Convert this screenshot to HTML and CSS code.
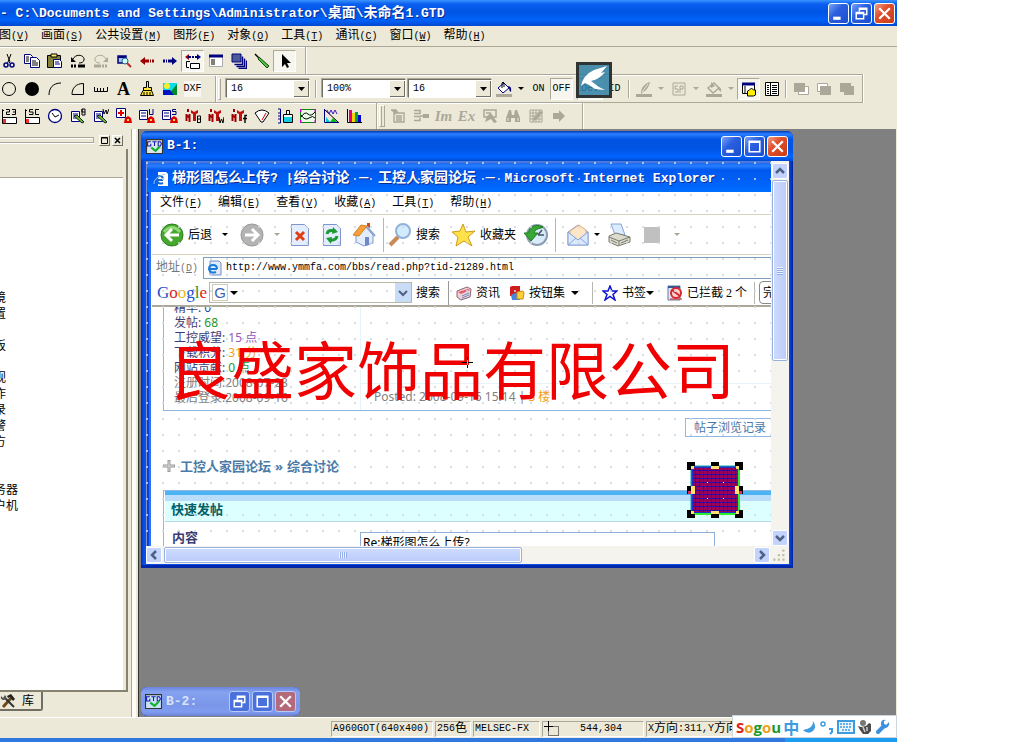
FILE: index.html
```
<!DOCTYPE html>
<html lang="zh">
<head>
  <meta charset="UTF-8" />
  <meta name="viewport" content="width=device-width, initial-scale=1.0"/>
  <title>C:\Documents and Settings\Administrator\桌面\未命名1.GTD</title>
  <link rel="stylesheet" href="styles.css">
</head>
<body>
<div class="app">

  <header class="titlebar">
    <h1 class="title">- C:\Documents and Settings\Administrator\<i>桌面</i>\<i>未命名</i>1.GTD</h1>
    <div class="win-buttons">
      <button class="win-btn" aria-label="最小化"><svg viewBox="0 0 18 18"><path d="M4 12h7v3H4z" fill="#fff"/></svg></button>
      <button class="win-btn" aria-label="还原"><svg viewBox="0 0 18 18"><path d="M7 7V4h7v6h-3M7 5h7M4 8h7v6H4zM4 9h7" fill="none" stroke="#fff" stroke-width="1.4"/></svg></button>
      <button class="win-btn close" aria-label="关闭"><svg viewBox="0 0 18 18"><path d="M4 4l10 10M14 4L4 14" stroke="#fff" stroke-width="2.2"/></svg></button>
    </div>
  </header>

  <nav class="menubar">
    <a href="#">图<small>(<u>V</u>)</small></a>
    <a href="#">画面<small>(<u>S</u>)</small></a>
    <a href="#">公共设置<small>(<u>M</u>)</small></a>
    <a href="#">图形<small>(<u>F</u>)</small></a>
    <a href="#">对象<small>(<u>O</u>)</small></a>
    <a href="#">工具<small>(<u>T</u>)</small></a>
    <a href="#">通讯<small>(<u>C</u>)</small></a>
    <a href="#">窗口<small>(<u>W</u>)</small></a>
    <a href="#">帮助<small>(<u>H</u>)</small></a>
  </nav>

  <!-- 标准工具栏 -->
  <div class="toolbar main">
    <button class="tool" aria-label="剪切"><svg viewBox="0 0 16 16"><path d="M6 1l3 8M10 1L7 9" stroke="#000" fill="none"/><path d="M7 9L6 11M8 9l2 2" stroke="#00007f"/><circle cx="5" cy="12" r="2" fill="none" stroke="#00007f" stroke-width="1.5"/><circle cx="11" cy="12" r="2" fill="none" stroke="#00007f" stroke-width="1.5"/></svg></button>
    <button class="tool" aria-label="复制"><svg viewBox="0 0 16 16"><path d="M.5 1.500h6l2 2v7h-8z" fill="#fff" stroke="#00007f"/><path d="M2 4h3M2 6h3M2 8h3" stroke="#000"/><path d="M6.500 4.500h6l3 3v7h-9z" fill="#fff" stroke="#00007f"/><path d="M8 8h4M8 10h6M8 12h6" stroke="#000"/></svg></button>
    <button class="tool" aria-label="粘贴"><svg viewBox="0 0 16 16"><path d="M.5 2.500h13v12H.5z" fill="#84823c" stroke="#000"/><path d="M4 1h6v3H4z" fill="#ffe96a" stroke="#000"/><path d="M6.500 6.500h6l2 2v6h-8z" fill="#fff" stroke="#00007f"/><path d="M8 9h4M8 11h5" stroke="#00007f"/></svg></button>
    <button class="tool" aria-label="撤销"><svg viewBox="0 0 16 16"><path d="M3 6c3-6 12-4 11 1-.5 2-2 3-5 3" fill="none" stroke="#000"/><path d="M1 4v5h5z"/><path d="M1 13h6" stroke="#000" stroke-width="3" stroke-dasharray="2 1"/><path d="M8 13h7" stroke="#000" stroke-width="3"/></svg></button>
    <button class="tool" disabled aria-label="重做"><svg viewBox="0 0 16 16"><g fill="none" stroke="#aca899"><path d="M13 6c-3-6-12-4-11 1 .5 2 2 3 5 3"/><path d="M9 13h6" stroke-width="3" stroke-dasharray="2 1"/><path d="M1 13h7" stroke-width="3"/></g><path d="M15 4v5h-5z" fill="#aca899"/></svg></button>
    <button class="tool" aria-label="预览"><svg viewBox="0 0 16 16"><path d="M2 3h8v7H2z" fill="#9fc3e8" stroke="#00007f" stroke-width="1.500"/><path d="M2 4h8" stroke="#00007f" stroke-width="2"/><circle cx="9" cy="8" r="3" fill="#cff" stroke="#24648c"/><path d="M11 10l4 4" stroke="#c3282b" stroke-width="2"/></svg></button>
    <button class="tool" aria-label="上一个"><svg viewBox="0 0 16 16"><path d="M1 8l5-4v8z" fill="#9b0000"/><path d="M5 8h5M11 8h1M13 8h2" stroke="#9b0000" stroke-width="3"/></svg></button>
    <button class="tool" aria-label="下一个"><svg viewBox="0 0 16 16"><path d="M15 8l-5-4v8z" fill="#00007f"/><path d="M11 8H6M5 8H4M3 8H1" stroke="#00007f" stroke-width="3"/></svg></button>
    <button class="tool pressed" aria-label="切换画面"><svg viewBox="0 0 16 16"><path d="M0 4l4-3v6z" fill="#9b0000"/><path d="M16 4l-4-3v6z" fill="#00007f"/><path d="M3 4h3M7 4h2M10 4h3" stroke="#00007f" stroke-width="2"/><path d="M5 8.500H1.500v6H4M5.500 10.500h9v5h-9z" fill="#fff" stroke="#000"/></svg></button>
    <button class="tool" aria-label="画面列表"><svg viewBox="0 0 16 16"><path d="M1.500 2.500h13v11h-13z" fill="#fff" stroke="#aaa"/><path d="M1 3h14" stroke="#00007f" stroke-width="3"/><path d="M3 7h4M3 9h4M3 11h4" stroke="#000"/></svg></button>
    <button class="tool" aria-label="层叠"><svg viewBox="0 0 16 16"><path d="M7.500 15.500h8v-8M5.500 13.500h8v-8M3.500 11.500h8v-8" fill="none" stroke="#00007f" stroke-width="1.400"/><path d="M1 1h9v8H1z" fill="#4a5898" stroke="#00007f"/></svg></button>
    <button class="tool" aria-label="画笔"><svg viewBox="0 0 16 16"><path d="M1 1l5 5" stroke="#000" stroke-width="1.500"/><path d="M5 4l10 9-2 2L4 6z" fill="#4fc63a" stroke="#124b12"/></svg></button>
    <button class="tool pressed" aria-label="选择"><svg viewBox="0 0 16 16"><path d="M5 1v13l3-3 2 4 2-1-2-4h4z"/></svg></button>
  </div>

  <!-- 绘图工具栏 -->
  <div class="toolbar draw">
    <button class="tool" aria-label="圆"><svg viewBox="0 0 16 16"><circle cx="8" cy="8" r="6.500" fill="none" stroke="#000"/></svg></button>
    <button class="tool" aria-label="实心圆"><svg viewBox="0 0 16 16"><circle cx="8" cy="8" r="7"/></svg></button>
    <button class="tool" aria-label="圆弧"><svg viewBox="0 0 16 16"><path d="M2 14C2 7 6 2 14 2" fill="none" stroke="#000"/></svg></button>
    <button class="tool" aria-label="扇形"><svg viewBox="0 0 16 16"><path d="M2 13.500C2 7 6 2.500 13.500 2.500v11z" fill="none" stroke="#000"/></svg></button>
    <button class="tool" aria-label="刻度"><svg viewBox="0 0 16 16"><path d="M1.500 6v4.500h13V6M4.500 7v3M7.500 7v3M10.500 7v3" fill="none" stroke="#000"/></svg></button>
    <button class="tool letter">A</button>
    <button class="tool" aria-label="刷子"><svg viewBox="0 0 16 16"><path d="M7.500.5h2v6h3v3h-8v-3h3z" fill="#ffe83b" stroke="#000"/><path d="M4 9.500L1.500 14.500h13l-2-5zM5 11v3M8 11v3M11 11v3" fill="#ffe83b" stroke="#000"/></svg></button>
    <button class="tool" aria-label="图片"><svg viewBox="0 0 16 16"><path d="M1 2h14v12H1z" fill="#10dbea"/><path d="M15 3v11H6z" fill="#008b2b"/><path d="M1 9h7l4 5H1z" fill="#0014c4"/><circle cx="5" cy="5" r="3" fill="#f8ef26"/></svg></button>
    <button class="tool white">DXF</button>
    <span class="sep wide"></span><span class="grip"></span>
    <select class="combo" aria-label="线宽"><option>16</option></select>
    <span class="sep mid"></span>
    <select class="combo" aria-label="缩放"><option>100%</option></select>
    <select class="combo near" aria-label="网格"><option>16</option></select>
    <button class="tool" aria-label="填充"><svg viewBox="0 0 16 16"><path d="M0 13h16v3H0z" fill="#aca899"/><path d="M8 2l5 5-6 5-5-5z" fill="#fff" stroke="#00007f"/><path d="M6 7V2q1-2 2 0v4" fill="none" stroke="#000"/><path d="M12 5q4 0 3 6-2-1-2-4z" fill="#00007f"/></svg></button>
    <span class="drop"></span>
    <button class="tool">ON</button>
    <button class="tool pressed">OFF</button>
    <button class="tool pressed dev">Dev</button>
    <button class="tool">ID</button>
    <span class="sep"></span>
    <button class="tool" disabled aria-label="线条颜色"><svg viewBox="0 0 16 16"><path d="M0 13h16v3H0zM5 12c0-5 3-9 9-11-1 5-4 9-7 10l-2 2z" fill="#aca899"/><path d="M6 11l6-8" stroke="#ece9d8"/></svg></button>
    <span class="drop off"></span>
    <button class="tool" disabled aria-label="SP"><svg viewBox="0 0 16 16"><path d="M2 2h12v12H2z" fill="none" stroke="#aca899"/><path d="M7 5H4v3h3v3H4M9 12V5h3v3H9" fill="none" stroke="#aca899"/></svg></button>
    <span class="drop off"></span>
    <button class="tool" disabled aria-label="填充颜色"><svg viewBox="0 0 16 16"><path d="M0 13h16v3H0z" fill="#aca899"/><path d="M8 2l5 5-6 5-5-5z" fill="none" stroke="#aca899" stroke-width="1.500"/><path d="M5 7V1l4 4M12 6q4 0 3 5-3-2-3-5z" fill="#aca899"/></svg></button>
    <span class="drop off"></span>
    <button class="tool pressed" aria-label="属性"><svg viewBox="0 0 16 16"><path d="M1.500 2.500h12v10h-12z" fill="#fff" stroke="#000"/><path d="M1 3h13" stroke="#00007f" stroke-width="3"/><path d="M4 5v8" stroke="#000"/><path d="M6.500 10l2-1 2-2 2 2h2v5l-2 1h-6z" fill="#fff200" stroke="#000"/></svg></button>
    <button class="tool" aria-label="列表"><svg viewBox="0 0 16 16"><path d="M1.500 1.500h13v13h-13zM6.500 2v12" fill="#fff" stroke="#000"/><path d="M3 4.500h2M3 6.500h2M3 8.500h2M3 10.500h2M3 12.500h2M8 4.500h5M8 6.500h5M8 8.500h5M8 10.500h5M8 12.500h5" stroke="#000"/></svg></button>
    <span class="sep"></span>
    <button class="tool" disabled aria-label="置前"><svg viewBox="0 0 16 16"><path d="M5.500 5.500h10v8h-10z" fill="#fff" stroke="#aca899"/><path d="M1 2h11v9H1z" fill="#aca899"/></svg></button>
    <button class="tool" disabled aria-label="置后"><svg viewBox="0 0 16 16"><path d="M1.500 2.500h10v8h-10z" fill="#fff" stroke="#aca899"/><path d="M4 5h11v9H4z" fill="#aca899"/></svg></button>
    <button class="tool" disabled aria-label="组合"><svg viewBox="0 0 16 16"><path d="M1 2h11v3h3v9H5v-3H1z" fill="#aca899"/></svg></button>
  </div>

  <!-- 部件工具栏 -->
  <div class="toolbar last">
    <button class="tool" aria-label="数值"><svg viewBox="0 0 16 16"><path d="M1.500 15V1.500L3 3M5 1.500h3.500V4H5.500v2.500H9M11 1.500h3.500v5H11M12 4h2" fill="none" stroke="#000"/><path d="M1.500 9.500h14v6h-14z" fill="#fff" stroke="#000"/><path d="M2 11h3v4H2z" fill="#e33"/></svg></button>
    <button class="tool" aria-label="字符"><svg viewBox="0 0 16 16"><path d="M1.500 15V1.500L3 3M9 1.500H5.500V4H9v2.500H5M15 1.500h-3.500v5H15" fill="none" stroke="#000"/><path d="M1.500 9.500h14v6h-14z" fill="#fff" stroke="#000"/><path d="M2 11h3v4H2z" fill="#e33"/></svg></button>
    <button class="tool" aria-label="时钟"><svg viewBox="0 0 16 16"><circle cx="8" cy="8" r="6.500" fill="#fff" stroke="#00007f" stroke-width="1.300"/><path d="M5 5l3 4 4-2" fill="none" stroke="#000"/></svg></button>
    <button class="tool" aria-label="注释B"><svg viewBox="0 0 16 16"><path d="M1.500 3.500h8v10h-8z" fill="#fff" stroke="#00007f"/><path d="M3 6h5M3 8h5M3 10h4" stroke="#00007f"/><path d="M4 8l3-1 7 7-2 1z" fill="#70bb20" stroke="#123"/><path d="M12 1v6h3V4h-3V1h3v3" fill="none" stroke="#000"/></svg></button>
    <button class="tool" aria-label="注释W"><svg viewBox="0 0 16 16"><path d="M1.500 3.500h8v10h-8z" fill="#fff" stroke="#00007f"/><path d="M3 6h5M3 8h5M3 10h4" stroke="#00007f"/><path d="M4 8l3-1 7 7-2 1z" fill="#70bb20" stroke="#123"/><path d="M10 1l1 5 2-4 1 4 2-5" fill="none" stroke="#000"/></svg></button>
    <button class="tool" aria-label="报警历史"><svg viewBox="0 0 16 16"><path d="M.5.500h9v9h-9z" fill="#fff" stroke="#00007f"/><path d="M5 2v6M2 5h6" stroke="#e00000" stroke-width="2"/><path d="M8 15l1-5 3-2 3 2 1 5z" fill="#e00000"/><path d="M12 11v2" stroke="#ffdf3c" stroke-width="2"/></svg></button>
    <button class="tool" aria-label="用户报警"><svg viewBox="0 0 16 16"><path d="M.5 2.500h8v9h-8z" fill="#fff" stroke="#00007f"/><path d="M2 5h5M2 8h5M10.500 1v5.500H14V1" fill="none" stroke="#00007f"/><path d="M8 15l1-5 3-2 3 2 1 5z" fill="#e00000"/><path d="M12 11v2" stroke="#ffdf3c" stroke-width="2"/></svg></button>
    <button class="tool" aria-label="系统报警"><svg viewBox="0 0 16 16"><path d="M.5 2.500h8v9h-8z" fill="#fff" stroke="#00007f"/><path d="M2 5h5M2 8h5M14 1.500h-3.500v2H14v3h-4" fill="none" stroke="#00007f"/><path d="M8 15l1-5 3-2 3 2 1 5z" fill="#e00000"/><path d="M12 11v2" stroke="#ffdf3c" stroke-width="2"/></svg></button>
    <button class="tool" aria-label="部件B"><svg viewBox="0 0 16 16"><path d="M3 1v3M1.500 6v7M4.500 6v8M1 7l4 3" fill="none" stroke="#a00000" stroke-width="2"/><path d="M6 2l3 2 4-2v3l-2 1v7H8V6L6 5z" fill="#c01010"/><path d="M12.500 15V8h3v6.500h-3M12 11h3" fill="none" stroke="#000"/></svg></button>
    <button class="tool" aria-label="部件W"><svg viewBox="0 0 16 16"><path d="M3 1v3M1.500 6v7M4.500 6v8M1 7l4 3" fill="none" stroke="#a00000" stroke-width="2"/><path d="M6 2l3 2 4-2v3l-2 1v7H8V6L6 5z" fill="#c01010"/><path d="M11 9l1 6 1.500-4 1.500 4 1-6" fill="none" stroke="#000"/></svg></button>
    <button class="tool" aria-label="部件f"><svg viewBox="0 0 16 16"><path d="M3 1v3M1.500 6v7M4.500 6v8M1 7l4 3" fill="none" stroke="#a00000" stroke-width="2"/><path d="M6 2l3 2 4-2v3l-2 1v7H8V6L6 5z" fill="#c01010"/><path d="M16 7.500h-2V15M12 10.500h4" fill="none" stroke="#000" stroke-width="1.400"/></svg></button>
    <button class="tool" aria-label="面板仪表"><svg viewBox="0 0 16 16"><path d="M1 5q7-6 14 0l-6 9H7z" fill="#fff" stroke="#000"/><path d="M12 5l-4 7" stroke="#d00"/></svg></button>
    <button class="tool" aria-label="液位"><svg viewBox="0 0 16 16"><path d="M1 1h2.500v14H1M1 5h2M1 8h2M1 11h2" fill="none" stroke="#00007f"/><path d="M9.500 6V2.500h3V6M6.500 6.500h9v8h-9z" fill="#fff" stroke="#000"/><path d="M7 9h8v5H7z" fill="#11cfe0"/></svg></button>
    <button class="tool" aria-label="趋势图"><svg viewBox="0 0 16 16"><path d="M.5 1.500h15v13H.5z" fill="#eafbe8" stroke="#108010"/><path d="M.5 1v3M15.500 1v3M.5 12v3M15.500 12v3" stroke="#c0c" stroke-width="2"/><path d="M1 9q4-6 7-3t7-2M1 7q4 6 8 3t6 0" fill="none" stroke="#000"/></svg></button>
    <button class="tool" aria-label="折线图"><svg viewBox="0 0 16 16"><path d="M1.500 1v13.500H16" fill="none" stroke="#00007f"/><path d="M3 14V9l4 5z" fill="#0cc"/><path d="M7 14l3-4 4 4z" fill="#0b2"/><path d="M2 2l13 12" stroke="#000"/><path d="M4 2l2 4 2-4 2 4 2-4 2 4" fill="none" stroke="#4014c0"/></svg></button>
    <button class="tool" aria-label="柱状图"><svg viewBox="0 0 16 16"><path d="M1.500 1v13.500H16" fill="none" stroke="#000"/><path d="M3 2h3v12H3z" fill="#e2007a"/><path d="M6 5h3v9H6z" fill="#f3d300"/><path d="M9 4h3v10H9z" fill="#00a43a"/><path d="M12 7h3v7h-3z" fill="#0000d0"/></svg></button>
    <span class="sep wide"></span><span class="grip double"></span>
    <button class="tool" disabled aria-label="新建"><svg viewBox="0 0 16 16"><path d="M1 2h5l2 3M4 5h10v9H4zM6 8h6M6 10h6M6 12h6" fill="none" stroke="#aca899" stroke-width="1.400"/><path d="M1 2l5 5V2z" fill="#aca899"/></svg></button>
    <button class="tool" disabled aria-label="插入"><svg viewBox="0 0 16 16"><path d="M1 2.500h6v3H1M1 8.500h6M1 12.500h6v-3M7 8h4" fill="none" stroke="#aca899" stroke-width="1.400"/><path d="M10 6h6v4h-6z" fill="#aca899"/></svg></button>
    <button class="tool word" disabled>Im</button>
    <button class="tool word" disabled>Ex</button>
    <button class="tool" disabled aria-label="编辑"><svg viewBox="0 0 16 16"><path d="M2 2h12v7H2zM4 5h5" fill="none" stroke="#aca899" stroke-width="1.500"/><path d="M5 8l4-3 6 9-3 1-3-4-6 3z" fill="#aca899"/></svg></button>
    <button class="tool" disabled aria-label="查找"><svg viewBox="0 0 16 16"><path d="M4 2h2l1 5h2l1-5h2l3 8v4h-5v-4H6v4H1v-4z" fill="#aca899"/><path d="M3 10v3M13 10v3" stroke="#ece9d8"/></svg></button>
    <button class="tool" disabled aria-label="表格"><svg viewBox="0 0 16 16"><path d="M2 2h12v12H2zM2 5h12M2 8h12M2 11h12M5 2v12M8 2v12M11 2v12" fill="none" stroke="#aca899"/><path d="M12 3l3 1-7 8-3 1 1-4z" fill="#aca899"/></svg></button>
    <button class="tool" disabled aria-label="转到"><svg viewBox="0 0 16 16"><path d="M2 5h6V2l6 6-6 6v-3H2z" fill="#aca899"/></svg></button>
  </div>

  <main class="work">
    <aside class="side">
      <div class="side-head">
        <span class="side-grip"></span>
        <button class="mini" aria-label="停靠"><svg viewBox="0 0 9 9"><path d="M1.500 1.500h6v6h-6zM1 2h7" fill="none" stroke="#000"/></svg></button>
        <button class="mini" aria-label="关闭面板"><svg viewBox="0 0 9 9"><path d="M2 2l5 5M7 2L2 7" stroke="#000" stroke-width="1.500"/></svg></button>
      </div>
      <div class="side-body">
        <ul class="tree">
          <li>境</li><li>置</li>
          <li class="group">板</li>
          <li class="group">视</li><li>作</li><li>录</li><li>警</li><li>方</li>
          <li class="group far">务器</li><li>户机</li>
        </ul>
      </div>
      <div class="side-tabs">
        <button class="tab"><svg viewBox="0 0 16 16"><path d="M3 14L12 4" stroke="#6d4a1c" stroke-width="3"/><path d="M7 3l4-2 4 5-2 2-3-4-2 1z" fill="#222"/><path d="M5 5l9 9" stroke="#333" stroke-width="2"/><path d="M1 3l2 2 2-3q3 3-1 5Q0 7 1 3z" fill="#555"/></svg>库</button>
      </div>
    </aside>

    <section class="mdi">
      <article class="window">
        <header class="win-title">
          <svg class="gtd" viewBox="0 0 16 16"><path d="M.5 1.500h15v13H.5z" fill="#d9e6ee" stroke="#333"/><path d="M4.500 3.500h-3v4h3v-2M6 3.500h4M8 3.500v4M11.500 3.500v4h2l1-2-1-2z" fill="none" stroke="#1a1ab0"/><path d="M5 9l4 3 4-4" fill="none" stroke="#12b02c" stroke-width="2"/></svg>
          <h2>B-1:</h2>
          <div class="win-buttons">
            <button class="win-btn" aria-label="最小化"><svg viewBox="0 0 18 18"><path d="M4 12h7v3H4z" fill="#fff"/></svg></button>
            <button class="win-btn" aria-label="最大化"><svg viewBox="0 0 18 18"><path d="M4 4h10v10H4zM4 5h10" fill="none" stroke="#fff" stroke-width="1.500"/></svg></button>
            <button class="win-btn close" aria-label="关闭"><svg viewBox="0 0 18 18"><path d="M4 4l10 10M14 4L4 14" stroke="#fff" stroke-width="2.200"/></svg></button>
          </div>
        </header>

        <div class="win-body">
          <div class="canvas">
            <div class="ie">
              <div class="ie-title">
                <svg viewBox="0 0 16 16"><path d="M5 1h8l2 2v12H5z" fill="#fff"/><path d="M10 9H4q0-4 3-4 3 0 3 4M4 9q1 5 6 3" fill="none" stroke="#1767d2" stroke-width="2"/><path d="M1 13Q0 7 12 3" fill="none" stroke="#8fc5f5"/></svg>
                <span><i>梯形图怎么上传</i>? |<i>综合讨论</i> － <i>工控人家园论坛</i> － Microsoft Internet Explorer</span>
              </div>
              <div class="ie-menu">
                <a href="#">文件<small>(<u>F</u>)</small></a><a href="#">编辑<small>(<u>E</u>)</small></a><a href="#">查看<small>(<u>V</u>)</small></a><a href="#">收藏<small>(<u>A</u>)</small></a><a href="#">工具<small>(<u>T</u>)</small></a><a href="#">帮助<small>(<u>H</u>)</small></a>
              </div>
              <div class="ie-tools">
                <button class="nav"><svg viewBox="0 0 24 24"><circle cx="12" cy="12" r="11" fill="#45a82c" stroke="#2d7f1c"/><path d="M4 9q8-9 16 0" stroke="#8fd873" stroke-width="3" fill="none"/><path d="M19 12H8M12 6l-6 6 6 6" fill="none" stroke="#fff" stroke-width="3"/></svg>后退</button>
                <span class="drop"></span>
                <button class="nav fwd" disabled aria-label="前进"><svg viewBox="0 0 24 24"><circle cx="12" cy="12" r="11" fill="#b4b4b4" stroke="#999"/><path d="M5 12h11M12 6l6 6-6 6" fill="none" stroke="#fff" stroke-width="3"/></svg></button>
                <span class="drop off"></span>
                <button class="nav page-btn" aria-label="停止"><svg viewBox="0 0 24 24"><path d="M3.500 1.500h13l4 4v17h-17z" fill="#e4edfd" stroke="#7f95cc"/><path d="M8 9l8 8M16 9l-8 8" stroke="#e23c12" stroke-width="3"/></svg></button>
                <button class="nav page-btn" aria-label="刷新"><svg viewBox="0 0 24 24"><path d="M3.500 1.500h13l4 4v17h-17z" fill="#e4edfd" stroke="#7f95cc"/><path d="M7 11q1-5 8-3M17 13q-1 5-8 4" fill="none" stroke="#1c9a33" stroke-width="3"/><path d="M13 4l5 5-6 2zM11 21l-5-6 6-1z" fill="#1c9a33"/></svg></button>
                <button class="nav page-btn" aria-label="主页"><svg viewBox="0 0 24 24"><path d="M4 12l10-8 7 8v8l-9 3-8-4z" fill="#e3ecfa" stroke="#7f9ac8"/><path d="M1 12L9 2l6 1-8 10z" fill="#f6a13d" stroke="#d48225"/><path d="M15 4l8 9" stroke="#8ba6cf" stroke-width="2"/><path d="M13 14h4v8l-4 1z" fill="#6d89c9"/><path d="M15 0h3v5l-3-2z" fill="#c94a24"/></svg></button>
                <span class="ie-sep"></span>
                <button class="nav"><svg viewBox="0 0 24 24"><circle cx="15" cy="8" r="7" fill="#d3ebff" stroke="#90b2dc" stroke-width="2"/><path d="M10 14l-8 8" stroke="#c98a55" stroke-width="4"/></svg>搜索</button>
                <button class="nav"><svg viewBox="0 0 24 24"><path d="M11 1l3 8 9-1-7 6 4 9-8-5-8 5 2-9-6-5 8-1z" fill="#ffe14a" stroke="#cf9b1c"/></svg>收藏夹</button>
                <button class="nav page-btn" aria-label="历史"><svg viewBox="0 0 24 24"><circle cx="13" cy="12" r="10" fill="#d9eafa" stroke="#8b9cae" stroke-width="2"/><path d="M14 12h6M14 12l4-5" fill="none" stroke="#456" stroke-width="1.500"/><path d="M19 4Q8-1 4 10H0l7 8 7-8h-4q1-4 7-5z" fill="#38a834" stroke="#1e7a1f"/></svg></button>
                <span class="ie-sep"></span>
                <button class="nav mail" aria-label="邮件"><svg viewBox="0 0 24 24"><path d="M2 9L12 2l10 7v13H2z" fill="#cfe1fb" stroke="#86a2d8"/><path d="M4 8l9-6 7 5v6l-8 4-8-4z" fill="#fde6c8" stroke="#e0ae7b"/><path d="M2 9l10 8 10-8v13H2zM2 22l8-7M22 22l-8-7" fill="#dbe9fd" stroke="#86a2d8"/></svg></button>
                <span class="drop tight"></span>
                <button class="nav page-btn" aria-label="打印"><svg viewBox="0 0 24 24"><path d="M3 1h10l4 11H7z" fill="#dcebff" stroke="#86a2d8"/><path d="M1 13l7-3 14 4v5l-12 4-9-4z" fill="#dddbcc" stroke="#77786e"/><path d="M1 14l10 4 11-4M11 18v4M3 17l6 3M13 20l7-3" fill="none" stroke="#77786e"/></svg></button>
                <button class="nav page-btn" disabled aria-label="编辑"><svg viewBox="0 0 24 24"><path d="M4 4h16v16H4z" fill="#c0c0c0"/></svg></button>
                <span class="drop off"></span>
              </div>
              <div class="ie-address">
                <label for="url">地址<small>(<u>D</u>)</small></label>
                <div class="url-box">
                  <svg viewBox="0 0 16 16"><path d="M4 1h9l2 2v12H4z" fill="#dfeafb" stroke="#6f8cc4"/><path d="M11 9H3q0-4 4-4 4 0 4 4M3 9q1 5 7 3" fill="none" stroke="#1b7bd8" stroke-width="2"/></svg>
                  <input id="url" type="text" value="http://www.ymmfa.com/bbs/read.php?tid-21289.html">
                </div>
              </div>
              <div class="ie-google">
                <span class="logo"><b class="blue">G</b><b class="red">o</b><b class="gold">o</b><b class="blue">g</b><b class="green">l</b><b class="red">e</b></span>
                <div class="g-box"><span class="g-icon">G</span><span class="drop"></span><input type="text" aria-label="Google 搜索"><button class="g-drop" aria-label="展开"><svg viewBox="0 0 10 10"><path d="M1 3l4 4 4-4" fill="none" stroke="#4d6185" stroke-width="2"/></svg></button></div>
                <button class="g-btn">搜索</button>
                <span class="g-handle"></span>
                <button class="g-btn"><svg viewBox="0 0 16 16"><path d="M1 6l10-4 4 2-1 8-9 3-4-3z" fill="#eed1d5" stroke="#8c6472"/><path d="M2 7l10-3 2 1-9 4z" fill="#e3606b"/><path d="M6 11l7-3M6 13l7-3" stroke="#718bc0"/></svg>资讯</button>
                <button class="g-btn set"><svg viewBox="0 0 16 16"><path d="M1 2l2-1h8v8l-3 2H1z" fill="#cf1c1c"/><path d="M2 10l4-2 5 1v6H3z" fill="#4486e0"/><path d="M8 7l6-1 1 2-1 6H8z" fill="#ffcf35" stroke="#c18f18"/></svg>按钮集</button>
                <span class="drop big"></span>
                <span class="ie-sep"></span>
                <button class="g-btn set" aria-label="添加书签"><svg viewBox="0 0 16 16"><path d="M8 1l2 5h5l-4 3.500 2 5.500-5-3.500L3 15l2-5.500L1 6h5z" fill="#fff" stroke="#0b15cf" stroke-width="1.500"/></svg></button>
                <button class="g-btn">书签</button><span class="drop big tight"></span>
                <button class="g-btn set"><svg viewBox="0 0 16 16"><path d="M1 1h12v14H1z" fill="#dde8f8" stroke="#667a99"/><path d="M1 2h12" stroke="#38559b" stroke-width="2"/><circle cx="9" cy="8" r="5" fill="#fbd5d0" stroke="#d7262d" stroke-width="2"/><path d="M5 5l8 6" stroke="#d7262d" stroke-width="2"/><path d="M3 14h12" stroke="#d7262d"/></svg>已拦截 2 个</button>
                <span class="ie-sep"></span>
                <button class="g-btn cut">完</button>
              </div>

              <div class="page">
                <div class="post">
                  <ul class="user">
                    <li>精华: <span class="navy">0</span></li>
                    <li>发帖: <span class="green">68</span></li>
                    <li>工控威望: <span class="purple">15 点</span></li>
                    <li>下载积分: <span class="orange">31 分</span></li>
                    <li>网站贡献: <span class="green">0 点</span></li>
                    <li class="gray">注册时间:2008-07-23</li>
                    <li class="gray">最后登录:2008-09-16</li>
                  </ul>
                  <div class="post-foot">Posted: 2008-09-16 15:14 | <span class="orange">3 楼</span></div>
                </div>
                <div class="history"><a href="#">帖子浏览记录</a></div>
                <div class="crumbs">
                  <svg viewBox="0 0 12 12"><path d="M6 0v12M0 6h12" stroke="#999" stroke-width="3"/><path d="M6 1v10M1 6h10" stroke="#ddd"/></svg>
                  <a href="#">工控人家园论坛</a><span>»</span><a href="#">综合讨论</a>
                </div>
                <div class="reply">
                  <h3>快速发帖</h3>
                  <div class="reply-row">
                    <label for="subject">内容</label>
                    <input id="subject" type="text" value="Re:梯形图怎么上传?">
                  </div>
                </div>
              </div>
            </div>

            <div class="dots"></div>
            <div class="big-text">良盛家饰品有限公司</div>
            <svg class="cross" viewBox="0 0 11 11"><path d="M5.500 0v11M0 5.500h11" stroke="#000"/><path d="M5.500 3v5" stroke="#4ee"/></svg>
            <svg class="shape" viewBox="0 0 56 56">
              <defs><pattern id="mesh" width="4" height="4" patternUnits="userSpaceOnUse"><path d="M0 0h4v4H0z" fill="#9c0058"/><path d="M0 0h4v1H1v3H0z" fill="#2a0aa8"/></pattern></defs>
              <path d="M5 5h46v46H5z" fill="url(#mesh)" stroke="#2330c8" stroke-width="2"/>
              <path d="M52 6v46H5" fill="none" stroke="#2bf02b" stroke-width="2"/><path d="M4 52V4h48" fill="none" stroke="#14a8a8"/>
              <path d="M20 20h1v1h-1zM36 20h1v1h-1zM20 36h1v1h-1zM36 36h1v1h-1z" fill="#fff"/>
              <path d="M0 0h8v4H4v4H0zM24 0h8v4h-8zM48 0h8v8h-4V4h-4zM0 24h4v8H0zM52 24h4v8h-4zM0 48h4v4h4v4H0zM24 52h8v4h-8zM52 48h4v8h-8v-4h4z"/>
              <path d="M24 4h8v3h-8zM4 24h4v8H4zM48 24h4v8h-4zM24 49h8v3h-8zM4 4h3v3H4zM49 4h3v3h-3zM4 49h3v3H4zM49 49h3v3h-3z" fill="#ffe26f"/>
              <path d="M1 29h3v3H1zM52 29h3v3h-3z" fill="#e0285c"/>
            </svg>
          </div>

          <div class="vscroll">
            <button class="sb-btn" aria-label="向上"><svg viewBox="0 0 14 14"><path d="M3 9l4-4 4 4" fill="none" stroke="#4d6185" stroke-width="2.500"/></svg></button>
            <div class="v-thumb"></div>
            <button class="sb-btn" aria-label="向下"><svg viewBox="0 0 14 14"><path d="M3 5l4 4 4-4" fill="none" stroke="#4d6185" stroke-width="2.500"/></svg></button>
          </div>
          <div class="hscroll">
            <button class="sb-btn" aria-label="向左"><svg viewBox="0 0 14 14"><path d="M9 3L5 7l4 4" fill="none" stroke="#4d6185" stroke-width="2.500"/></svg></button>
            <div class="h-thumb"></div>
            <button class="sb-btn" aria-label="向右"><svg viewBox="0 0 14 14"><path d="M5 3l4 4-4 4" fill="none" stroke="#4d6185" stroke-width="2.500"/></svg></button>
          </div>
          <div class="corner"><svg viewBox="0 0 16 16"><path d="M10 3h2v2h-2zM6 7h2v2H6zM10 7h2v2h-2zM2 11h2v2H2zM6 11h2v2H6zM10 11h2v2h-2z" fill="#c4bfa8"/></svg></div>
        </div>
      </article>

      <article class="window small">
        <header class="win-title">
          <svg class="gtd" viewBox="0 0 16 16"><path d="M.5 1.500h15v13H.5z" fill="#c6e2f4" stroke="#333"/><path d="M4.500 3.500h-3v4h3v-2M6 3.500h4M8 3.500v4M11.500 3.500v4h2l1-2-1-2z" fill="none" stroke="#1a1ab0"/><path d="M5 9l4 3 4-4" fill="none" stroke="#12b02c" stroke-width="2"/></svg>
          <h2>B-2:</h2>
          <div class="win-buttons">
            <button class="win-btn" aria-label="还原"><svg viewBox="0 0 18 18"><path d="M7 7V4h7v6h-3M7 5h7M4 8h7v6H4zM4 9h7" fill="none" stroke="#fff" stroke-width="1.400"/></svg></button>
            <button class="win-btn" aria-label="最大化"><svg viewBox="0 0 18 18"><path d="M4 4h10v10H4zM4 5h10" fill="none" stroke="#fff" stroke-width="1.500"/></svg></button>
            <button class="win-btn close" aria-label="关闭"><svg viewBox="0 0 18 18"><path d="M4 4l10 10M14 4L4 14" stroke="#fff" stroke-width="2.200"/></svg></button>
          </div>
        </header>
      </article>
    </section>
  </main>

  <footer class="status">
    <span class="cell model">A960GOT(640x400)</span>
    <span class="cell color">256<i>色</i></span>
    <span class="cell plc">MELSEC-FX</span>
    <span class="cell pos"><svg viewBox="0 0 16 16"><path d="M0 5.500h9M4.500 0v10" stroke="#000" fill="none"/><path d="M4.500 5.500h10v9h-10z" fill="none" stroke="#000" stroke-dasharray="1 1"/></svg><span>544,304</span></span>
    <span class="cell dir">X<i>方向</i>:311,Y<i>方向</i></span>
  </footer>
  <div class="taskbar"><span></span></div>

  <svg class="bird" viewBox="0 0 36 36"><path d="M1.500 1.500h33v33h-33z" fill="#2f7fa3" fill-opacity=".86" stroke="#303432" stroke-width="3"/><path d="M31 4L18 8Q7 13 5 24l4-3 4 2 6 4 10 1-6-3-8-6q9-2 14-9l-4 1z" fill="#fff"/></svg>

  <div class="ime">
    <span class="sogou"><b class="red">S</b><b class="orange">o</b><b class="green">g</b><b class="orange">o</b><b class="green">u</b></span>
    <span class="zhong">中</span>
    <svg viewBox="0 0 16 16"><path d="M12 2q1 7-10 9 5 5 10 1 4-4 0-10z" fill="#3d9be0"/></svg>
    <svg viewBox="0 0 16 16"><circle cx="4" cy="5" r="2" fill="none" stroke="#3d9be0" stroke-width="1.500"/><path d="M10 10h3v3l-2 2" fill="none" stroke="#3d9be0" stroke-width="2"/></svg>
    <svg class="kbd" viewBox="0 0 18 16"><path d="M1 2h16v12H1z" fill="#eaf5ff" stroke="#3d9be0" stroke-width="2"/><path d="M3 5h12M3 8h12M5 11h8" stroke="#3d9be0" stroke-width="1.500" stroke-dasharray="2 1"/></svg>
    <svg viewBox="0 0 16 16"><circle cx="6" cy="4" r="3" fill="#777"/><path d="M1 7l3 1 5-1 3-3 2 1v7l-3 3H6l-3-4z" fill="#4b4b4b"/><path d="M6 8l2 5M10 8v4" stroke="#ccc" stroke-width="1.500"/></svg>
    <svg viewBox="0 0 16 16"><path d="M3 13l6-6" stroke="#3d8fe0" stroke-width="4" stroke-linecap="round"/><path d="M14 3l-3 3-2-1V2l2-1q-5-1-5 4 1 5 5 4 4-2 3-6z" fill="#3d8fe0"/></svg>
  </div>
</div>
</body>
</html>
```
FILE: styles.css
```
* {
  box-sizing: border-box;
}

body {
  margin: 0;
  background: #fff;
  color: #000;
  font-family: "Liberation Serif", "Noto Sans CJK SC", serif;
  font-size: 12px;
  line-height: 16px;
}

button, input, select {
  font: inherit;
  color: inherit;
  margin: 0;
  padding: 0;
  border: none;
  background: none;
}

a {
  color: inherit;
  text-decoration: none;
}

h1, h2, h3, ul {
  margin: 0;
  padding: 0;
  list-style: none;
}

svg {
  display: block;
  flex: none;
}

i {
  font-style: normal;
  font-size: 12px;
}

small {
  font-family: "Liberation Mono", monospace;
  font-size: 10px;
}

.app {
  position: relative;
  display: flex;
  flex-direction: column;
  height: 100vh;
  margin-right: 127px;
  overflow: hidden;
  background: #ece9d8;
  white-space: nowrap;
}

/* 标题栏 */
.titlebar {
  display: flex;
  align-items: center;
  justify-content: space-between;
  flex: none;
  height: 26px;
  padding-right: 2px;
  background: linear-gradient(#3a93ff 0, #0a5ff0 4px, #0054e3 12px, #0062fa 20px, #0048d0 26px);
}

.title, .win-title h2, .ie-title {
  font-family: "Liberation Mono", "Noto Sans CJK SC", monospace;
  font-size: 13px;
  font-weight: bold;
  color: #fff;
  text-shadow: 1px 1px #0a2a8c;
}

.title i, .ie-title i {
  font-size: 14px;
}

.win-buttons {
  display: flex;
  gap: 2px;
}

.win-btn {
  width: 21px;
  height: 21px;
  border: 1px solid #fff;
  border-radius: 3px;
  background: linear-gradient(135deg, #7aa4f8, #2a5fe0 40%, #1c4fd0);
}

.win-btn svg {
  width: 19px;
  height: 19px;
}

.win-btn.close {
  background: linear-gradient(135deg, #f0a088, #e04f2c 40%, #c83c14);
}

/* 菜单和工具栏 */
.menubar {
  display: flex;
  align-items: center;
  gap: 12px;
  flex: none;
  height: 21px;
  border-bottom: 1px solid #aca899;
}

.menubar a:first-child {
  margin-left: -1px;
}

.toolbar {
  display: flex;
  align-items: center;
  flex: none;
  align-self: flex-start;
  padding-right: 4px;
  border: solid #aca899;
  border-width: 0 1px 0 0;
  box-shadow: inset 0 1px #fff, 1px 0 #fff;
}

.toolbar.main {
  height: 27px;
  padding-right: 9px;
}

.toolbar.draw {
  height: 29px;
  border-width: 1px 1px 1px 0;
}

.toolbar.last {
  height: 26px;
  padding-right: 12px;
}

.toolbar .tool:first-child {
  margin-left: -3px;
}

.tool {
  display: flex;
  align-items: center;
  justify-content: center;
  flex: none;
  width: 23px;
  height: 22px;
  font-family: "Liberation Mono", monospace;
  font-size: 10px;
}

.tool svg {
  width: 16px;
  height: 16px;
}

.tool.pressed {
  border: 1px solid;
  border-color: #aca899 #fff #fff #aca899;
  background: #f6f5ee;
}

.tool.letter {
  font-family: "Liberation Serif", serif;
  font-size: 18px;
  font-weight: bold;
}

.tool.white {
  padding: 3px;
  background: #f8f7f2;
  background-clip: content-box;
}

.tool.word {
  font-family: "Liberation Serif", serif;
  font-size: 15px;
  font-style: italic;
  font-weight: bold;
  color: #aca899;
}

.tool.dev {
  width: 26px;
  margin-left: 4px;
}

.sep {
  width: 2px;
  height: 18px;
  margin: 0 2px;
  border-left: 1px solid #aca899;
  border-right: 1px solid #fff;
  flex: none;
}

.sep.mid {
  margin: 0 5px;
}

.sep.wide {
  height: 26px;
  margin: 0 1px 0 11px;
}

.grip {
  width: 3px;
  height: 22px;
  margin-right: 5px;
  border: 1px solid;
  border-color: #fff #aca899 #aca899 #fff;
  flex: none;
}

.grip.double {
  width: 6px;
  margin-right: 1px;
  box-shadow: inset -2px 0 #ece9d8, inset -3px 0 #aca899;
}

.combo {
  width: 84px;
  height: 19px;
  padding-left: 4px;
  appearance: none;
  border: 1px solid;
  border-color: #716f64 #fff #fff #716f64;
  box-shadow: -1px -1px #aca899;
  background: #fff url('data:image/svg+xml,<svg xmlns="http://www.w3.org/2000/svg" width="15" height="16"><path d="M0 0h15v16H0z" fill="%23716f64"/><path d="M0 0h14v15H0z" fill="%23ece9d8"/><path d="M4 6h7l-3.500 4z"/></svg>') right center no-repeat;
  font-family: "Liberation Mono", monospace;
  font-size: 10px;
}

.combo.near {
  margin-left: 2px;
}

.drop {
  flex: none;
  width: 0;
  margin: 0 6px;
  border: 3px solid transparent;
  border-top-color: #000;
  border-bottom: none;
}

.toolbar .drop {
  margin: 0 3px;
}

.drop.off {
  border-top-color: #aca899;
}

/* 左侧面板 */
.work {
  display: flex;
  flex: 1;
  min-height: 0;
}

.side {
  display: flex;
  flex-direction: column;
  flex: none;
  width: 139px;
  padding-right: 10px;
  border-right: 1px solid #333;
  background: linear-gradient(90deg, transparent 131px, #aca899 131px 132px, #fffef6 132px 136px, #ece9d8 136px);
  overflow: hidden;
}

.side-head {
  display: flex;
  align-items: center;
  gap: 2px;
  height: 20px;
  padding: 2px 5px 0 0;
}

.side-grip {
  flex: 1;
  height: 6px;
  margin-right: 3px;
  border: solid #aca899;
  border-width: 1px 1px 1px 0;
  box-shadow: inset 0 1px #fff, 0 1px #fff;
}

.mini {
  width: 11px;
  height: 11px;
  border: 1px solid;
  border-color: #fff #716f64 #716f64 #fff;
}

.mini svg {
  width: 9px;
  height: 9px;
}

.side-body {
  flex: 1;
  min-height: 0;
  padding: 28px 3px 0 0;
  border: solid #85826f;
  border-width: 0 2px 2px 0;
}

.tree {
  height: 100%;
  padding-top: 112px;
  border-top: 1px solid #aca899;
  background: #fff;
  overflow: hidden;
}

.tree li {
  height: 16px;
  margin-left: -6px;
}

.tree .group {
  margin-top: 16px;
}

.tree .far {
  margin-top: 32px;
}

.side-tabs {
  height: 25px;
}

.tab {
  display: flex;
  align-items: center;
  gap: 6px;
  height: 19px;
  padding-right: 7px;
  border: solid #716f64;
  border-width: 0 2px 2px 0;
  border-radius: 0 0 3px 0;
}

.tab svg {
  width: 16px;
  height: 16px;
}

/* 子窗口 */
.mdi {
  position: relative;
  flex: 1;
  min-width: 0;
  border-right: 1px solid #ece9d8;
  background: #808080;
  overflow: hidden;
}

.window {
  position: absolute;
  left: 2px;
  top: 2px;
  display: flex;
  flex-direction: column;
  width: 652px;
  height: 437px;
  padding: 0 4px 4px 5px;
  border-radius: 6px 6px 0 0;
  background: linear-gradient(90deg, #0030b8, #0a50e8 3px, #0a50e8 648px, #001f9c);
  box-shadow: inset 0 -3px #0028a8;
}

.win-title {
  display: flex;
  align-items: center;
  gap: 4px;
  flex: none;
  height: 30px;
  margin: 0 -4px 0 -5px;
  padding: 0 5px;
  border-radius: 6px 6px 0 0;
  background: linear-gradient(#0038b8 0, #2a80ff 3px, #0054e3 8px, #0054e3 18px, #0064ff 26px, #0048d0 30px);
}

.gtd {
  width: 17px;
  height: 17px;
}

.win-title h2 {
  flex: 1;
}

.window.small {
  top: auto;
  bottom: 1px;
  width: 159px;
  height: 29px;
  border-radius: 6px;
}

.small .win-title {
  height: 29px;
  padding: 0 4px;
  border-radius: 6px;
  background: linear-gradient(#6a85dc, #84a2f0 5px, #7b96e8 18px, #7f9cf0 25px, #6a80d0);
}

.small h2 {
  color: #d8e4f8;
  text-shadow: none;
}

.small .win-btn {
  border-color: #b8c8f8;
  background: #4a70dc;
}

.small .close {
  background: #b56a7c;
}

.win-body {
  flex: 1;
  min-height: 0;
  display: grid;
  grid-template-columns: 1fr 18px;
  grid-template-rows: 1fr 18px;
  background: #f4f3ee;
}

.canvas {
  position: relative;
  overflow: hidden;
  background: #fff;
}

.dots {
  position: absolute;
  inset: 0;
  background: radial-gradient(circle at 1px 1px, rgba(206, 216, 224, 0.8) 1px, transparent 1px) 0 1px / 16px 16px;
  pointer-events: none;
}

.big-text {
  position: absolute;
  left: 22px;
  top: 174px;
  font-family: "Noto Sans CJK SC", sans-serif;
  font-size: 63px;
  line-height: 64px;
  color: #f00000;
}

.cross {
  position: absolute;
  left: 316px;
  top: 196px;
  width: 11px;
  height: 11px;
}

.shape {
  position: absolute;
  left: 541px;
  top: 301px;
  width: 56px;
  height: 56px;
}

/* 浏览器画面 */
.ie {
  display: flex;
  flex-direction: column;
  height: 100%;
  padding-left: 6px;
  background: linear-gradient(90deg, #7f92c8 1px, #0b3fd0 1px 3px, #2a70ff 3px 5px, #fff 5px);
}

.ie-title {
  display: flex;
  align-items: center;
  gap: 3px;
  flex: none;
  height: 31px;
  margin-left: -5px;
  padding: 4px 0 0 6px;
  background: linear-gradient(#5f7fd0 0, #1a6cf8 3px, #2a80ff 5px, #0058ee 9px, #0062fa 22px, #0070ff 31px);
}

.ie-title svg {
  width: 16px;
  height: 16px;
}

.ie-menu {
  display: flex;
  align-items: center;
  gap: 16px;
  flex: none;
  height: 23px;
  padding-left: 8px;
  border-bottom: 1px solid #d8d4c0;
}

.ie-tools {
  display: flex;
  align-items: center;
  flex: none;
  height: 40px;
  padding-left: 8px;
  border-bottom: 1px solid #d8d4c0;
}

.nav {
  display: flex;
  align-items: center;
  gap: 4px;
  padding: 0;
  margin-right: 4px;
}

.nav + .nav {
  margin-left: 8px;
}

.nav svg {
  width: 24px;
  height: 24px;
}

.nav.fwd, .nav.mail {
  margin: 0 4px 0 6px;
}

.nav.page-btn {
  margin: 0 4px;
}

.drop.off + .nav.page-btn {
  margin-left: 2px;
}

.ie-sep {
  flex: none;
  width: 1px;
  height: 34px;
  margin: 0 4px 0 3px;
  background: #b9b8b0;
}

.drop.tight {
  margin: 0 4px 0 0;
}

.drop.big {
  border-width: 4px 4px 0;
}

.ie-address {
  display: flex;
  align-items: center;
  gap: 5px;
  flex: none;
  height: 25px;
  padding-left: 4px;
  color: #777;
}

.url-box {
  display: flex;
  align-items: center;
  gap: 4px;
  flex: 1;
  height: 22px;
  padding-left: 2px;
  border: solid #7f9db9;
  border-width: 1px 0 1px 1px;
}

.url-box svg {
  width: 16px;
  height: 16px;
}

.url-box input {
  flex: 1;
  font-family: "Liberation Mono", monospace;
  font-size: 10px;
  color: #000;
}

.ie-google {
  display: flex;
  align-items: center;
  flex: none;
  height: 27px;
  padding-left: 5px;
  border-bottom: 2px solid #aca899;
  overflow: hidden;
}

.logo {
  flex: none;
  width: 52px;
  font-size: 17px;
}

.logo b {
  font-weight: normal;
}

.g-box {
  display: flex;
  align-items: center;
  flex: none;
  width: 203px;
  height: 21px;
  padding-left: 2px;
  border: 1px solid #b7b9a8;
}

.g-icon {
  width: 16px;
  height: 17px;
  border: 1px solid #ccb;
  font-family: "Liberation Sans", sans-serif;
  font-size: 15px;
  text-align: center;
  color: #3c64b8;
}

.g-box .drop {
  margin: 0 0 0 2px;
  border-width: 4px 4px 0;
}

.g-box input {
  flex: 1;
  min-width: 0;
}

.g-drop {
  display: flex;
  align-items: center;
  justify-content: center;
  width: 16px;
  height: 19px;
  background: #c8dcf8;
}

.g-drop svg {
  width: 10px;
  height: 10px;
}

.g-btn {
  display: flex;
  align-items: center;
  gap: 4px;
  flex: none;
  margin-left: 4px;
}

.g-btn svg {
  width: 16px;
  height: 16px;
}

.g-btn.set {
  margin-left: 9px;
}

.g-btn.cut {
  height: 23px;
  margin-left: 4px;
  padding-left: 3px;
  border: 1px solid #888;
  border-radius: 4px;
}

.g-handle {
  flex: none;
  width: 7px;
  height: 24px;
  margin: 0 0 0 5px;
  background: linear-gradient(90deg, transparent 3px, #999 3px 4px, transparent 4px);
}

.ie-google .ie-sep {
  height: 22px;
  margin: 0 0 0 7px;
}

/* 论坛网页 */
.page {
  flex: 1;
  min-height: 0;
  padding-left: 11px;
  overflow: hidden;
  font-family: "Noto Sans", "Noto Sans CJK SC", sans-serif;
  font-size: 12px;
}

.post {
  display: flex;
  height: 104px;
  border: solid #90b8e0;
  border-width: 0 0 1px 1px;
}

.user {
  flex: none;
  width: 197px;
  margin-top: -7px;
  padding-left: 10px;
  border-right: 1px solid #e4f4f8;
  line-height: 15px;
  color: #3c3c74;
}

.user .gray, .post-foot {
  color: #808080;
}

.post-foot {
  flex: 1;
  align-self: flex-end;
  height: 27px;
  padding: 5px 0 0 13px;
  border-top: 1px solid #e4f4f8;
}

.history {
  display: flex;
  justify-content: flex-end;
  padding-top: 7px;
}

.history a {
  height: 19px;
  padding: 0 5px 0 8px;
  border: solid #90b8e0;
  border-width: 1px 0 1px 1px;
  line-height: 17px;
  color: #4a78a8;
}

.crumbs {
  display: flex;
  align-items: center;
  gap: 4px;
  margin: 21px 0 16px;
  font-weight: bold;
  font-size: 13px;
  color: #4a7aa8;
}

.crumbs svg {
  width: 12px;
  height: 12px;
  margin-right: 1px;
}

.reply {
  border: solid #90b8e0;
  border-width: 1px 0 0 1px;
  padding-left: 1px;
}

.reply h3 {
  height: 31px;
  padding: 6px 6px 0;
  border-top: 4px solid #4cb4f4;
  border-bottom: 1px solid #b8d8e8;
  background: linear-gradient(#b8dcfa 6px, #dcffff 6px);
  font-size: 13px;
  color: #006068;
}

.reply-row {
  display: flex;
  align-items: flex-start;
  padding: 10px 0 0 7px;
}

.reply-row label {
  width: 188px;
  margin-top: -3px;
  font-size: 13px;
  font-weight: bold;
  color: #3c3c74;
}

.reply-row input {
  width: 355px;
  height: 20px;
  padding-left: 2px;
  border: 1px solid #90b0d8;
}

.red { color: #e02020; }
.blue { color: #2a50d0; }
.gold { color: #e8b818; }
.green { color: #209828; }
.orange { color: #f0a020; }
.purple { color: #9458b8; }
.navy { color: #2848a0; }

/* 滚动条 */
.vscroll {
  display: flex;
  flex-direction: column;
  padding: 2px 1px 0;
  gap: 1px;
}

.hscroll {
  display: flex;
  justify-content: space-between;
  padding: 1px 1px 1px 0;
  gap: 2px;
}

.sb-btn {
  flex: none;
  width: 16px;
  height: 16px;
  border: 1px solid #fff;
  border-radius: 2px;
  background: #c3d3fd;
}

.sb-btn svg {
  width: 14px;
  height: 14px;
}

.v-thumb, .h-thumb {
  border: 1px solid #98b0e0;
  border-radius: 2px;
  box-shadow: inset 0 0 0 1px #fff;
}

.v-thumb {
  height: 181px;
  margin-bottom: auto;
  background: repeating-linear-gradient(#eef4fe 0 1px, #94ace8 1px 2px) center / 6px 8px no-repeat, linear-gradient(90deg, #cfdcfe, #b9cbfa);
}

.h-thumb {
  width: 358px;
  margin-right: auto;
  background: repeating-linear-gradient(90deg, #eef4fe 0 1px, #94ace8 1px 2px) center / 8px 6px no-repeat, linear-gradient(#cfdcfe, #b9cbfa);
}

.corner svg {
  width: 18px;
  height: 18px;
}

/* 状态栏 */
.status {
  display: flex;
  gap: 2px;
  flex: none;
  height: 21px;
  padding: 3px 0 2px 331px;
  border-top: 1px solid #fff;
  font-family: "Liberation Mono", "Noto Sans CJK SC", monospace;
  font-size: 10px;
}

.cell {
  display: flex;
  align-items: center;
  flex: none;
  height: 16px;
  padding: 0 1px;
  border: 1px solid;
  border-color: #aca899 #fff #fff #aca899;
}

.cell.model { width: 102px; }
.cell.color { width: 36px; }
.cell.plc { width: 67px; }
.cell.pos { width: 102px; }

.cell.dir {
  flex: 1;
}

.cell svg {
  width: 16px;
  height: 16px;
}

.pos span {
  flex: 1;
  text-align: center;
}

.taskbar {
  flex: none;
  display: flex;
  justify-content: flex-end;
  height: 4px;
  background: #2f78e0;
}

.taskbar span {
  width: 112px;
  background: #1c9cf0;
}

/* 悬浮图标和输入法 */
.bird {
  position: absolute;
  left: 576px;
  top: 62px;
  width: 36px;
  height: 36px;
}

.ime {
  position: absolute;
  right: 0;
  bottom: 4px;
  display: flex;
  align-items: center;
  justify-content: space-between;
  width: 165px;
  height: 23px;
  padding: 0 5px 0 3px;
  border: 1px solid #ccd4dc;
  background: #fff;
}

.ime svg {
  width: 16px;
  height: 16px;
}

.ime .kbd {
  width: 18px;
}

.sogou {
  font-family: "Open Sans", sans-serif;
  font-size: 15px;
}

.zhong {
  font-family: "Noto Sans CJK SC", sans-serif;
  font-size: 16px;
  font-weight: bold;
  color: #3d9be0;
}
```
